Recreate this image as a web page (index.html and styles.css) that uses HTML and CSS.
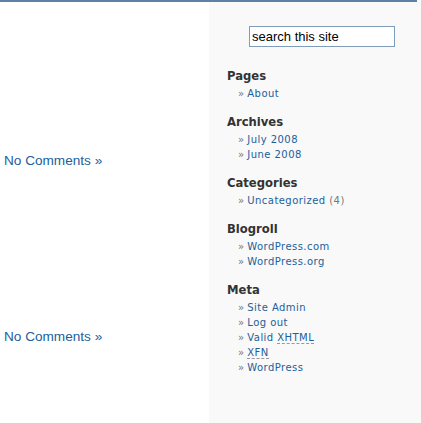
FILE: index.html
```html
<!DOCTYPE html>
<html>
<head>
<meta charset="utf-8">
<link rel="stylesheet" href="styles.css">
</head>
<body>
<div class="page">
  <div class="content">
    <div class="post"><a class="comments" href="#">No Comments »</a></div>
    <div class="post"><a class="comments" href="#">No Comments »</a></div>
  </div>
  <div class="sidebar">
    <div class="search"><input class="search-input" type="text" value="search this site"></div>
    <div class="section">
      <h2 class="heading">Pages</h2>
      <ul class="list"><li><a href="#">About</a></li></ul>
    </div>
    <div class="section">
      <h2 class="heading">Archives</h2>
      <ul class="list"><li><a href="#">July 2008</a></li><li><a href="#">June 2008</a></li></ul>
    </div>
    <div class="section">
      <h2 class="heading">Categories</h2>
      <ul class="list"><li><a href="#">Uncategorized</a> <span class="count">(4)</span></li></ul>
    </div>
    <div class="section">
      <h2 class="heading">Blogroll</h2>
      <ul class="list"><li><a href="#">WordPress.com</a></li><li><a href="#">WordPress.org</a></li></ul>
    </div>
    <div class="section">
      <h2 class="heading">Meta</h2>
      <ul class="list">
        <li><a href="#">Site Admin</a></li>
        <li><a href="#">Log out</a></li>
        <li><a href="#">Valid <abbr class="abbr">XHTML</abbr></a></li>
        <li><a href="#"><abbr class="abbr">XFN</abbr></a></li>
        <li><a href="#">WordPress</a></li>
      </ul>
    </div>
  </div>
</div>
</body>
</html>
```
FILE: styles.css
```css
html, body { margin: 0; padding: 0; background: #fff; }
.page {
  width: 421px;
  height: 423px;
  display: flex;
  position: relative;
  overflow: hidden;
}
.page::before {
  content: "";
  position: absolute;
  left: 0; top: 0;
  width: 417px; height: 2px;
  background: #5f80a5;
}
.content {
  width: 209px;
  padding-top: 152px;
  box-sizing: border-box;
}
.post { padding-left: 4px; line-height: 16px; }
.post + .post { margin-top: 159px; }
.comments {
  font-family: "Liberation Sans", Arial, sans-serif;
  font-size: 13.6px;
  line-height: 16px;
  color: #22609b;
  text-decoration: none;
}
.sidebar {
  flex: 1;
  background: #f9f9f9;
  padding: 26px 0 0 18px;
}
.search { padding-left: 22px; height: 21px; }
.search-input {
  box-sizing: border-box;
  width: 146px; height: 21px;
  margin: 0;
  border: 1px solid #7f9db9;
  padding: 0 2px;
  font-family: "Liberation Sans", Arial, sans-serif;
  font-size: 13px;
  color: #000;
  background: #fff;
  outline: none;
}
.section { margin-bottom: 10px; }
.search + .section { margin-top: 18px; }
.heading {
  margin: 0;
  padding-top: 1px;
  font-family: "DejaVu Sans", Verdana, sans-serif;
  font-size: 11.6px;
  font-weight: bold;
  line-height: 21px;
  color: #333;
}
.list {
  list-style: none;
  margin: -1px 0 0 0;
  padding: 0 0 0 11px;
  font-family: "DejaVu Sans", Verdana, sans-serif;
  font-size: 10px;
  line-height: 15px;
  letter-spacing: 0.45px;
  color: #777;
}
.list li::before { content: "\00BB\0020"; color: #777; letter-spacing: 0; }
.list a { color: #22609b; text-decoration: none; }
.count { color: #777; }
.abbr { text-decoration: none; border-bottom: 1px dashed #999; }
```
